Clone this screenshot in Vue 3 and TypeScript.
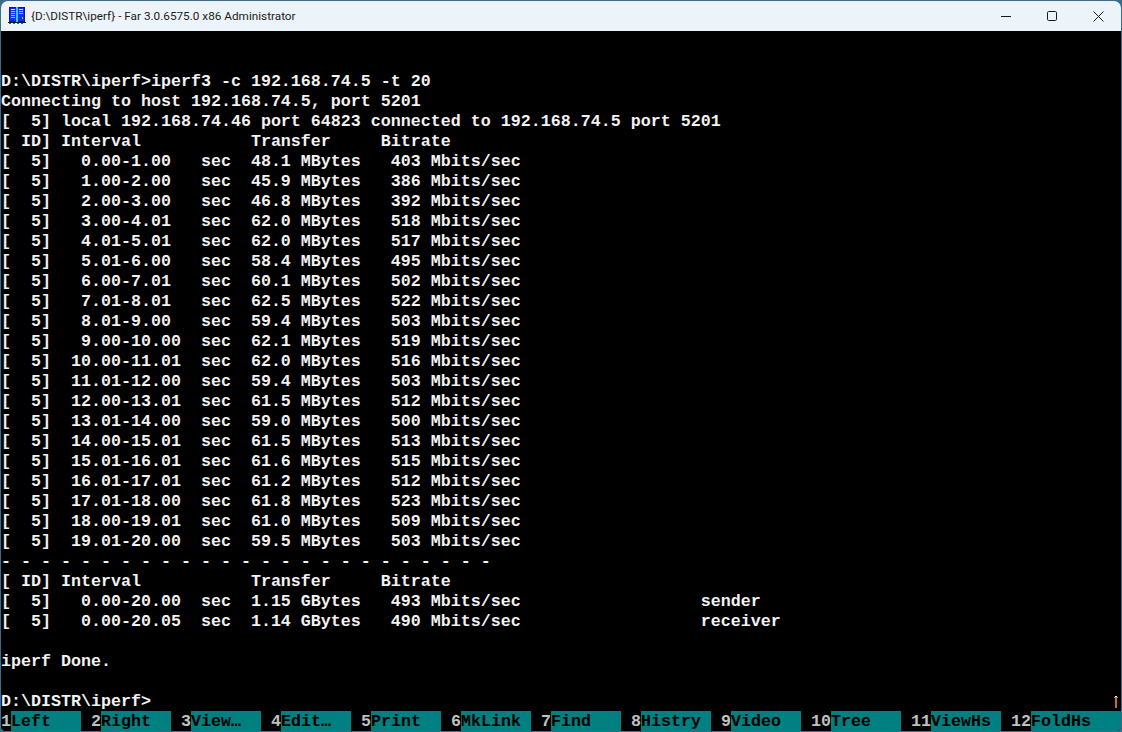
<script setup lang="ts">
const lines: string[] = [
  '',
  '',
  'D:\\DISTR\\iperf>iperf3 -c 192.168.74.5 -t 20',
  'Connecting to host 192.168.74.5, port 5201',
  '[  5] local 192.168.74.46 port 64823 connected to 192.168.74.5 port 5201',
  '[ ID] Interval           Transfer     Bitrate',
  '[  5]   0.00-1.00   sec  48.1 MBytes   403 Mbits/sec',
  '[  5]   1.00-2.00   sec  45.9 MBytes   386 Mbits/sec',
  '[  5]   2.00-3.00   sec  46.8 MBytes   392 Mbits/sec',
  '[  5]   3.00-4.01   sec  62.0 MBytes   518 Mbits/sec',
  '[  5]   4.01-5.01   sec  62.0 MBytes   517 Mbits/sec',
  '[  5]   5.01-6.00   sec  58.4 MBytes   495 Mbits/sec',
  '[  5]   6.00-7.01   sec  60.1 MBytes   502 Mbits/sec',
  '[  5]   7.01-8.01   sec  62.5 MBytes   522 Mbits/sec',
  '[  5]   8.01-9.00   sec  59.4 MBytes   503 Mbits/sec',
  '[  5]   9.00-10.00  sec  62.1 MBytes   519 Mbits/sec',
  '[  5]  10.00-11.01  sec  62.0 MBytes   516 Mbits/sec',
  '[  5]  11.01-12.00  sec  59.4 MBytes   503 Mbits/sec',
  '[  5]  12.00-13.01  sec  61.5 MBytes   512 Mbits/sec',
  '[  5]  13.01-14.00  sec  59.0 MBytes   500 Mbits/sec',
  '[  5]  14.00-15.01  sec  61.5 MBytes   513 Mbits/sec',
  '[  5]  15.01-16.01  sec  61.6 MBytes   515 Mbits/sec',
  '[  5]  16.01-17.01  sec  61.2 MBytes   512 Mbits/sec',
  '[  5]  17.01-18.00  sec  61.8 MBytes   523 Mbits/sec',
  '[  5]  18.00-19.01  sec  61.0 MBytes   509 Mbits/sec',
  '[  5]  19.01-20.00  sec  59.5 MBytes   503 Mbits/sec',
  '- - - - - - - - - - - - - - - - - - - - - - - - -',
  '[ ID] Interval           Transfer     Bitrate',
  '[  5]   0.00-20.00  sec  1.15 GBytes   493 Mbits/sec                  sender',
  '[  5]   0.00-20.05  sec  1.14 GBytes   490 Mbits/sec                  receiver',
  '',
  'iperf Done.',
  '',
  'D:\\DISTR\\iperf>',
]

const keys: { n: string; label: string }[] = [
  { n: '1', label: 'Left' },
  { n: ' 2', label: 'Right' },
  { n: ' 3', label: 'View…' },
  { n: ' 4', label: 'Edit…' },
  { n: ' 5', label: 'Print' },
  { n: ' 6', label: 'MkLink' },
  { n: ' 7', label: 'Find' },
  { n: ' 8', label: 'Histry' },
  { n: ' 9', label: 'Video' },
  { n: ' 10', label: 'Tree' },
  { n: ' 11', label: 'ViewHs' },
  { n: ' 12', label: 'FoldHs' },
]
</script>

<template>
  <div class="window">
    <header class="titlebar">
      <svg class="app-icon" width="18" height="18" viewBox="0 0 18 18" shape-rendering="crispEdges">
        <rect x="1" y="0" width="16" height="15" fill="#0a1a9a" />
        <rect x="2" y="1" width="6" height="13" fill="#1030f0" />
        <rect x="10" y="1" width="6" height="13" fill="#1030f0" />
        <rect x="8" y="0" width="2" height="15" fill="#30c8f0" />
        <rect x="3" y="2" width="4" height="1" fill="#d8f6ff" />
        <rect x="3" y="4" width="4" height="1" fill="#40e0ff" />
        <rect x="3" y="6" width="4" height="1" fill="#40e0ff" />
        <rect x="3" y="8" width="4" height="1" fill="#40e0ff" />
        <rect x="3" y="10" width="4" height="1" fill="#40e0ff" />
        <rect x="11" y="2" width="4" height="1" fill="#d8f6ff" />
        <rect x="11" y="4" width="4" height="1" fill="#40e0ff" />
        <rect x="11" y="6" width="4" height="1" fill="#40e0ff" />
        <rect x="14" y="10" width="1" height="2" fill="#40e0ff" />
        <rect x="0" y="15" width="18" height="1" fill="#10201a" />
        <path d="M1 16h2v1H1zM5 16h2v1H5zM9 16h2v1H9zM13 16h2v1h-2z" fill="#4a5c50" />
      </svg>
      <span class="title">{D:\DISTR\iperf} - Far 3.0.6575.0 x86 Administrator</span>
      <div class="controls">
        <svg class="ctl" width="46" height="30" viewBox="0 0 46 30">
          <path d="M18 15.5h10" stroke="#1a1a1a" stroke-width="1" fill="none" />
        </svg>
        <svg class="ctl" width="46" height="30" viewBox="0 0 46 30">
          <rect x="18.5" y="10.5" width="9" height="9" rx="1.2" stroke="#1a1a1a" stroke-width="1" fill="none" />
        </svg>
        <svg class="ctl" width="46" height="30" viewBox="0 0 46 30">
          <path d="M18.5 10.5l10 10M28.5 10.5l-10 10" stroke="#1a1a1a" stroke-width="1" fill="none" />
        </svg>
      </div>
    </header>
    <main class="console">
      <div v-for="(line, i) in lines" :key="i" class="row">{{ line }}</div>
      <svg class="scroll-arrow" width="10" height="20" viewBox="0 0 10 20" shape-rendering="crispEdges">
        <rect x="4" y="6" width="2" height="11" fill="#c87020" />
        <rect x="4" y="5" width="2" height="1" fill="#fff" />
        <rect x="3" y="6" width="1" height="1" fill="#8fb8e0" />
        <rect x="6" y="6" width="1" height="1" fill="#c87020" />
      </svg>
    </main>
    <footer class="keybar">
      <div v-for="k in keys" :key="k.n" class="key">
        <span class="num">{{ k.n }}</span><span class="label">{{ k.label }}</span>
      </div>
    </footer>
  </div>
</template>

<style scoped>
.window {
  width: 1122px;
  height: 732px;
  box-sizing: border-box;
  display: flex;
  flex-direction: column;
  background: #3f6b8a;
  padding: 1px;
  border-radius: 8px;
  overflow: hidden;
}
.titlebar {
  height: 30px;
  flex: none;
  display: flex;
  align-items: center;
  background: #edf4f9;
  border-radius: 7px 7px 0 0;
  padding-left: 7px;
}
.app-icon {
  flex: none;
  margin-top: -1px;
}
.title {
  margin-left: 5px;
  font: 11.75px "Roboto", "Noto Sans", sans-serif;
  color: #1a1a1a;
  white-space: nowrap;
}
.controls {
  margin-left: auto;
  display: flex;
}
.ctl {
  display: block;
}
.console {
  flex: 1;
  position: relative;
  background: #000;
  color: #f2f2f2;
  font: bold 16.66px/22px "Liberation Mono", monospace;
  min-height: 0;
}
.row {
  height: 20px;
  white-space: pre;
}
.scroll-arrow {
  position: absolute;
  right: 0;
  bottom: 0;
  display: block;
}
.keybar {
  height: 20px;
  flex: none;
  display: flex;
  background: #000;
  font: bold 16.66px/22px "Liberation Mono", monospace;
  white-space: pre;
}
.key {
  display: flex;
  flex: none;
  height: 20px;
}
.num {
  color: #c0c0c0;
  height: 20px;
}
.label {
  width: 70px;
  height: 20px;
  background: #008080;
  color: #000;
}
.key:last-child {
  flex: 1;
}
.key:last-child .label {
  flex: 1;
}
</style>

<style>
html,
body {
  margin: 0;
  background: #3f6b8a;
}
</style>
